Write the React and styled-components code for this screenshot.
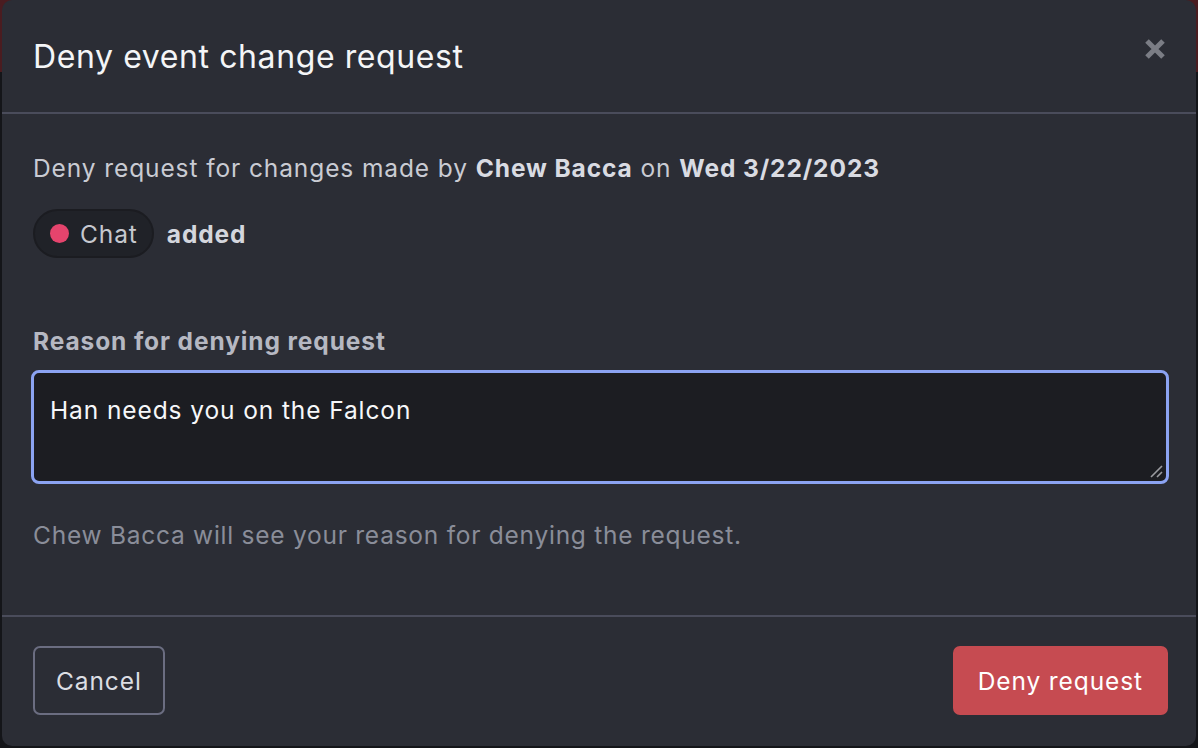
import React from "react";
import styled, { createGlobalStyle } from "styled-components";

const Global = createGlobalStyle`
  html, body { margin: 0; padding: 0; }
  body {
    background: linear-gradient(#4a1c20 0, #4a1c20 72px, #141519 72px);
    font-family: Inter, "Open Sans", sans-serif;
    width: 1198px; height: 748px; overflow: hidden;
  }
`;

const Modal = styled.div`
  margin-left: 2px;
  width: 1194px;
  height: 746px;
  background: #2b2d35;
  border-radius: 10px;
  display: flex;
  flex-direction: column;
  box-sizing: border-box;
  color: #c9cbd3;
  letter-spacing: 0.9px;
`;

const Header = styled.div`
  height: 114px;
  box-sizing: border-box;
  border-bottom: 2px solid #4a4c5b;
  display: flex;
  align-items: center;
  justify-content: space-between;
  padding: 0 31px;
`;

const Title = styled.h2`
  margin: 0;
  font-size: 32px;
  font-weight: 400;
  color: #f4f5f7;
  letter-spacing: 0.6px;
`;

const Close = styled.button`
  background: none;
  border: 0;
  padding: 0;
  width: 24px;
  height: 24px;
  display: flex;
  align-items: center;
  justify-content: center;
  margin-top: -14px;
  margin-right: -2px;
`;

const Body = styled.div`
  flex: 1;
  padding: 36px 31px 0;
  border-bottom: 2px solid #4a4c5b;
`;

const Text = styled.p`
  margin: 0;
  font-size: 24.5px;
  line-height: 36px;
  color: #c9cbd3;
  b { font-weight: 700; color: #d9dbe2; }
`;

const ChangeRow = styled.div`
  display: flex;
  align-items: center;
  gap: 13px;
  margin-top: 23px;
`;

const Pill = styled.span`
  display: inline-flex;
  align-items: center;
  gap: 11px;
  height: 49px;
  box-sizing: border-box;
  padding: 0 14px 0 15px;
  border-radius: 25px;
  background: #202228;
  border: 2px solid #1b1c21;
  font-size: 24.5px;
  color: #c6c8cf;
`;

const Dot = styled.span`
  width: 19px;
  height: 19px;
  border-radius: 50%;
  background: ${(p) => p.color};
`;

const Added = styled.span`
  font-size: 24.5px;
  font-weight: 700;
  color: #d4d6dd;
`;

const Label = styled.label`
  display: block;
  margin-top: 65px;
  font-size: 24.5px;
  font-weight: 700;
  color: #b6b8c2;
  line-height: 36px;
`;

const TextArea = styled.div`
  margin-top: 11px;
  width: 1138px;
  height: 114px;
  box-sizing: border-box;
  border: 3px solid #8ba3f2;
  border-radius: 8px;
  background: #1c1d22;
  padding: 20px 16px 8px;
  font-size: 24.5px;
  line-height: 34px;
  color: #f6f7f9;
  position: relative;
  margin-left: -2px;
`;

const Grip = styled.svg`
  position: absolute;
  right: 3px;
  bottom: 3px;
`;

const Help = styled.p`
  margin: 33px 0 0;
  font-size: 24.5px;
  line-height: 36px;
  letter-spacing: 0.75px;
  color: #8a8d99;
`;

const Footer = styled.div`
  height: 129px;
  display: flex;
  align-items: center;
  justify-content: space-between;
  padding: 0 28px 0 31px;
`;

const Button = styled.button`
  height: 69px;
  box-sizing: border-box;
  border-radius: 7px;
  font-family: inherit;
  font-size: 24.5px;
  letter-spacing: 0.9px;
  padding: 0 ${(p) => (p.$danger ? "23px" : "21px")};
  border: 2px solid ${(p) => (p.$danger ? "#c64b51" : "#6b6d81")};
  background: ${(p) => (p.$danger ? "#c64b51" : "transparent")};
  color: ${(p) => (p.$danger ? "#ffffff" : "#dcdee3")};
  margin-top: -2px;
`;

export default function App() {
  return (
    <>
      <Global />
      <Modal>
        <Header>
          <Title>Deny event change request</Title>
          <Close aria-label="Close">
            <svg width="22" height="22" viewBox="0 0 22 22">
              <path d="M3 3 L19 19 M19 3 L3 19" stroke="#7b7d85" strokeWidth="5" strokeLinecap="butt" />
            </svg>
          </Close>
        </Header>
        <Body>
          <Text>
            Deny request for changes made by <b>Chew Bacca</b> on <b>Wed 3/22/2023</b>
          </Text>
          <ChangeRow>
            <Pill>
              <Dot color="#e5446d" />
              Chat
            </Pill>
            <Added>added</Added>
          </ChangeRow>
          <Label>Reason for denying request</Label>
          <TextArea>
            Han needs you on the Falcon
            <Grip width="14" height="14" viewBox="0 0 14 14">
              <path d="M2 13 L13 2 M8 13 L13 8" stroke="#9a9ba0" strokeWidth="1.6" />
            </Grip>
          </TextArea>
          <Help>Chew Bacca will see your reason for denying the request.</Help>
        </Body>
        <Footer>
          <Button>Cancel</Button>
          <Button $danger>Deny request</Button>
        </Footer>
      </Modal>
    </>
  );
}
